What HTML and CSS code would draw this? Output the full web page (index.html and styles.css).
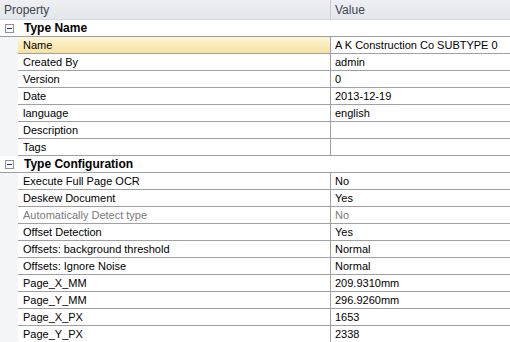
FILE: index.html
```html
<!DOCTYPE html>
<html lang="en">
<head>
    <meta charset="UTF-8">
    <title>Properties</title>
    <link rel="stylesheet" href="styles.css">
</head>
<body>
    <div class="grid">
        <div class="header">
            <div class="head-cell prop-head">Property</div>
            <div class="head-cell">Value</div>
        </div>

        <div class="category">
            <span class="toggle"></span>
            <span class="cat-name">Type Name</span>
        </div>
        <div class="row selected"><div class="margin"></div><div class="prop">Name</div><div class="val">A K Construction Co SUBTYPE 0</div></div>
        <div class="row"><div class="margin"></div><div class="prop">Created By</div><div class="val">admin</div></div>
        <div class="row"><div class="margin"></div><div class="prop">Version</div><div class="val">0</div></div>
        <div class="row"><div class="margin"></div><div class="prop">Date</div><div class="val">2013-12-19</div></div>
        <div class="row"><div class="margin"></div><div class="prop">language</div><div class="val">english</div></div>
        <div class="row"><div class="margin"></div><div class="prop">Description</div><div class="val"></div></div>
        <div class="row"><div class="margin"></div><div class="prop">Tags</div><div class="val"></div></div>

        <div class="category">
            <span class="toggle"></span>
            <span class="cat-name">Type Configuration</span>
        </div>
        <div class="row"><div class="margin"></div><div class="prop">Execute Full Page OCR</div><div class="val">No</div></div>
        <div class="row"><div class="margin"></div><div class="prop">Deskew Document</div><div class="val">Yes</div></div>
        <div class="row disabled"><div class="margin"></div><div class="prop">Automatically Detect type</div><div class="val">No</div></div>
        <div class="row"><div class="margin"></div><div class="prop">Offset Detection</div><div class="val">Yes</div></div>
        <div class="row"><div class="margin"></div><div class="prop">Offsets: background threshold</div><div class="val">Normal</div></div>
        <div class="row"><div class="margin"></div><div class="prop">Offsets: Ignore Noise</div><div class="val">Normal</div></div>
        <div class="row"><div class="margin"></div><div class="prop">Page_X_MM</div><div class="val">209.9310mm</div></div>
        <div class="row"><div class="margin"></div><div class="prop">Page_Y_MM</div><div class="val">296.9260mm</div></div>
        <div class="row"><div class="margin"></div><div class="prop">Page_X_PX</div><div class="val">1653</div></div>
        <div class="row"><div class="margin"></div><div class="prop">Page_Y_PX</div><div class="val">2338</div></div>
    </div>
</body>
</html>
```

FILE: styles.css
```css
* {
    margin: 0;
    padding: 0;
    box-sizing: border-box;
}

body {
    background: white;
    font-family: 'Liberation Sans', Arial, sans-serif;
    font-size: 11px;
    color: #000;
    overflow: hidden;
}

.grid {
    width: 510px;
}

.header {
    display: grid;
    grid-template-columns: 331px 1fr;
    height: 20px;
    background: linear-gradient(#eef0f3, #e3e6ea);
    border-bottom: 1px solid #d5d8dd;
}

.head-cell {
    padding: 3px 0 0 4px;
    color: #404550;
    font-size: 12px;
}

.prop-head {
    border-right: 1px solid #c6cbd2;
}

.category {
    display: flex;
    align-items: center;
    height: 17px;
    background: white;
    border-bottom: 1px solid #a0a0a0;
}

.toggle {
    position: relative;
    width: 9px;
    height: 9px;
    margin: 0 10px 0 5px;
    border: 1px solid #919191;
    background: white;
}

.toggle::after {
    content: '';
    position: absolute;
    left: 1px;
    top: 3px;
    width: 5px;
    height: 1px;
    background: #1e3287;
}

.cat-name {
    font-weight: bold;
    font-size: 12px;
}

.row {
    display: grid;
    grid-template-columns: 18px 313px 1fr;
    height: 17px;
}

.margin {
    background: #f4f5f7;
}

.prop,
.val {
    padding: 2px 0 0 5px;
    border-bottom: 1px solid #a0a0a0;
    white-space: nowrap;
    overflow: hidden;
}

.prop {
    border-right: 1px solid #a0a0a0;
}

.val {
    padding-left: 4px;
}

.row.selected .prop {
    background: linear-gradient(#fdf6d8, #f7e19e);
}

.row.disabled {
    color: #7a7a7a;
}

.row:last-child .prop,
.row:last-child .val {
    border-bottom: none;
}
```
